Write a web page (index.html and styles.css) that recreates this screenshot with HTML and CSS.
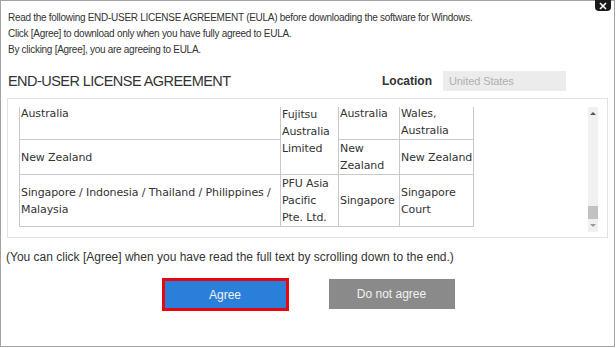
FILE: index.html
```html
<!DOCTYPE html>
<html lang="en">
<head>
<meta charset="utf-8">
<title>EULA</title>
<link rel="stylesheet" href="styles.css">
</head>
<body>
<div class="dialog">
  <button class="close" aria-label="Close">
    <svg width="8" height="8" viewBox="0 0 8 8"><path d="M1 1L7 7M7 1L1 7" stroke="#fff" stroke-width="1.6"/></svg>
  </button>
  <div class="intro">
    <p>Read the following END-USER LICENSE AGREEMENT (EULA) before downloading the software for Windows.</p>
    <p>Click [Agree] to download only when you have fully agreed to EULA.</p>
    <p>By clicking [Agree], you are agreeing to EULA.</p>
  </div>
  <div class="head-row">
    <h1 class="title">END-USER LICENSE AGREEMENT</h1>
    <label class="loc-label">Location</label>
    <div class="loc-input">United States</div>
  </div>
  <div class="scrollbox">
    <div class="viewport">
      <div class="content">
        <table class="eula-table">
          <tr class="r1">
            <td class="c1">Australia</td>
            <td class="c2" rowspan="2">Fujitsu Australia Limited</td>
            <td class="c3">Australia</td>
            <td class="c4">New South Wales, Australia</td>
          </tr>
          <tr class="r2">
            <td class="c1">New Zealand</td>
            <td class="c3">New Zealand</td>
            <td class="c4">New Zealand</td>
          </tr>
          <tr class="r3">
            <td class="c1">Singapore / Indonesia / Thailand / Philippines / Malaysia</td>
            <td class="c2">PFU Asia Pacific Pte. Ltd.</td>
            <td class="c3">Singapore</td>
            <td class="c4">Singapore Court</td>
          </tr>
        </table>
      </div>
      <div class="scrollbar">
        <span class="arrow up"></span>
        <span class="track"><span class="thumb"></span></span>
        <span class="arrow down"></span>
      </div>
    </div>
  </div>
  <p class="note">(You can click [Agree] when you have read the full text by scrolling down to the end.)</p>
  <div class="buttons">
    <button class="btn agree">Agree</button>
    <button class="btn disagree">Do not agree</button>
  </div>
</div>
</body>
</html>
```

FILE: styles.css
```css
* { box-sizing: border-box; }
html, body { margin: 0; padding: 0; background: #fff; }
body { width: 616px; height: 348px; overflow: hidden; }

.dialog {
  position: relative;
  width: 615px;
  height: 347px;
  border: 1px solid #a3a3a3;
  padding: 9px 0 0 7px;
  font-family: "Liberation Sans", Arial, sans-serif;
  color: #333;
}

.close {
  position: absolute;
  top: -1px;
  right: 3px;
  width: 16px;
  height: 11px;
  padding: 0;
  border: 0;
  background: #1a1a1a;
  border-radius: 0 0 4px 4px;
  display: flex;
  align-items: center;
  justify-content: center;
}

.intro p {
  margin: 0;
  font-size: 10px;
  letter-spacing: -0.28px;
  line-height: 16px;
}

.head-row {
  display: flex;
  align-items: center;
  margin-top: 13px;
  height: 20px;
}
.title {
  margin: 0;
  font-size: 14.5px;
  letter-spacing: -0.55px;
  font-weight: normal;
  line-height: 20px;
  color: #333;
  flex: 1;
}
.loc-label {
  font-size: 12px;
  font-weight: bold;
  margin-right: 11px;
}
.loc-input {
  width: 123px;
  height: 20px;
  background: #ececec;
  color: #b0b0b0;
  font-size: 11px;
  letter-spacing: -0.1px;
  line-height: 20px;
  padding-left: 6px;
  margin-right: 48px;
}

.scrollbox {
  width: 601px;
  height: 140px;
  margin-top: 7px;
  margin-left: -1px;
  border: 1px solid #e2e2e2;
  padding: 8px 9px 5px 11px;
}
.viewport {
  display: flex;
  height: 125px;
}
.content {
  flex: 1;
  overflow: hidden;
}
.eula-table {
  border-collapse: collapse;
  margin-top: -20px;
  font-family: "DejaVu Sans", Verdana, sans-serif;
  font-size: 11px;
  letter-spacing: -0.1px;
  line-height: 17px;
  color: #333;
}
.eula-table td {
  border: 1px solid #c9c9c9;
  padding: 0 0 0 1px;
  vertical-align: middle;
}
.eula-table .c1 { width: 261px; }
.eula-table .c2 { width: 58px; }
.eula-table .c3 { width: 61px; }
.eula-table .c4 { width: 74px; }

.scrollbar {
  width: 10px;
  background: #f0f0f0;
  display: flex;
  flex-direction: column;
  align-items: center;
}
.arrow {
  width: 0;
  height: 0;
  border-left: 3px solid transparent;
  border-right: 3px solid transparent;
  margin: 5px 0;
}
.arrow.up { border-bottom: 3px solid #555; }
.arrow.down { border-top: 3px solid #999; }
.track { flex: 1; width: 100%; position: relative; }
.thumb {
  position: absolute;
  left: 0;
  right: 0;
  bottom: 0;
  height: 13px;
  background: #c2c2c2;
}

.note {
  margin: 11px 0 0 -2px;
  font-size: 12px;
  line-height: 16px;
}

.buttons {
  display: flex;
  justify-content: center;
  gap: 40px;
  margin-top: 14px;
  padding-right: 6px;
}
.btn {
  font-family: "Liberation Sans", Arial, sans-serif;
  font-size: 12px;
  width: 126px;
  height: 30px;
  border: 0;
  color: #f2f2f2;
  padding: 0;
}
.agree {
  width: 127px;
  height: 33px;
  background: #2a7fdb;
  border: 3px solid #e8060f;
  margin-top: -1px;
}
.disagree {
  background: #8a8a8a;
}
```
